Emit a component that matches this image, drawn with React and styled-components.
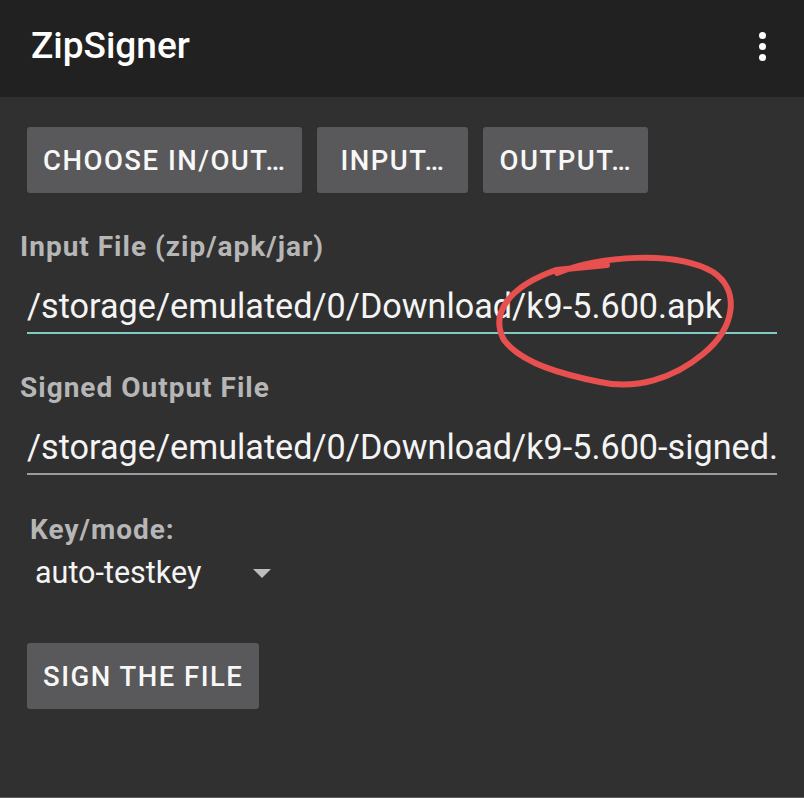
import React from "react";
import styled, { createGlobalStyle } from "styled-components";

const Global = createGlobalStyle`
  html, body { margin: 0; padding: 0; background: #303030; }
  body { font-family: Roboto, "Noto Sans", sans-serif; }
  * { box-sizing: border-box; }
`;

const Page = styled.div`
  position: relative;
  width: 804px;
  height: 798px;
  overflow: hidden;
  background: #303030;
`;

const AppBar = styled.header`
  height: 97px;
  background: #212121;
  display: flex;
  align-items: center;
  justify-content: space-between;
  padding: 0 38px 5px 31px;
`;

const Title = styled.h1`
  margin: 0;
  font-size: 37px;
  font-weight: 500;
  color: #ffffff;
  line-height: 44px;
`;

const Overflow = styled.div`
  display: flex;
  flex-direction: column;
  gap: 4px;
  span {
    display: block;
    width: 7px;
    height: 7px;
    border-radius: 50%;
    background: #ffffff;
  }
`;

const Content = styled.main`
  height: 701px;
  padding: 30px 27px 0;
  border-bottom: 1px solid #5c5c5c;
`;

const ButtonRow = styled.div`
  display: flex;
  gap: 15px;
`;

const Button = styled.button`
  height: 66px;
  min-width: 151px;
  padding: 0 16px;
  margin-top: ${(p) => p.$mt || 0}px;
  border: none;
  border-radius: 3px;
  background: #59595b;
  color: #f7f7f7;
  font-family: Roboto, sans-serif;
  font-size: 27.5px;
  font-weight: 500;
  letter-spacing: 1.5px;
  text-transform: uppercase;
  display: inline-flex;
  align-items: center;
  justify-content: center;
  white-space: nowrap;
`;

const FieldLabel = styled.div`
  margin: ${(p) => p.$mt}px 0 0 ${(p) => p.$ml}px;
  font-size: 28px;
  line-height: 34px;
  font-weight: 700;
  letter-spacing: 1px;
  color: #b6b6b6;
  white-space: nowrap;
`;

const TextField = styled.div`
  margin-top: 22px;
  padding-bottom: 6px;
  border-bottom: 2px solid ${(p) => (p.$focused ? "#80cbc4" : "#9c9c9c")};
  font-size: 34.2px;
  line-height: 40px;
  color: #f4f4f4;
  white-space: nowrap;
  overflow: hidden;
`;

const Spinner = styled.div`
  margin-top: 7px;
  width: 250px;
  display: flex;
  align-items: center;
  padding-left: 8px;
  font-size: 30.5px;
  line-height: 38px;
  color: #f4f4f4;
`;

const Caret = styled.span`
  margin-left: auto;
  margin-right: 6px;
  width: 0;
  height: 0;
  border-left: 9.5px solid transparent;
  border-right: 9.5px solid transparent;
  border-top: 9px solid #bdbdbd;
`;

const Annotation = styled.svg`
  position: absolute;
  left: 0;
  top: 0;
  pointer-events: none;
`;

export default function App() {
  return (
    <Page>
      <Global />
      <AppBar>
        <Title>ZipSigner</Title>
        <Overflow>
          <span />
          <span />
          <span />
        </Overflow>
      </AppBar>
      <Content>
        <ButtonRow>
          <Button>Choose in/out…</Button>
          <Button>Input…</Button>
          <Button>Output…</Button>
        </ButtonRow>
        <FieldLabel $mt={37} $ml={-7}>Input File (zip/apk/jar)</FieldLabel>
        <TextField $focused>/storage/emulated/0/Download/k9-5.600.apk</TextField>
        <FieldLabel $mt={37} $ml={-7}>Signed Output File</FieldLabel>
        <TextField>/storage/emulated/0/Download/k9-5.600-signed.apk</TextField>
        <FieldLabel $mt={38} $ml={3}>Key/mode:</FieldLabel>
        <Spinner>
          auto-testkey
          <Caret />
        </Spinner>
        <Button $mt={51}>Sign the file</Button>
      </Content>
      <Annotation width="804" height="798" viewBox="0 0 804 798">
        <path
          d="M 557 273 C 600 256, 675 250, 713 272 C 740 290, 736 327, 703 354 C 673 379, 635 390, 600 382 C 565 375, 522 364, 504 340 C 490 314, 508 287, 556 270 L 607 265"
          fill="none"
          stroke="#e8504f"
          strokeWidth="6"
          strokeLinecap="round"
          strokeLinejoin="round"
        />
      </Annotation>
    </Page>
  );
}
